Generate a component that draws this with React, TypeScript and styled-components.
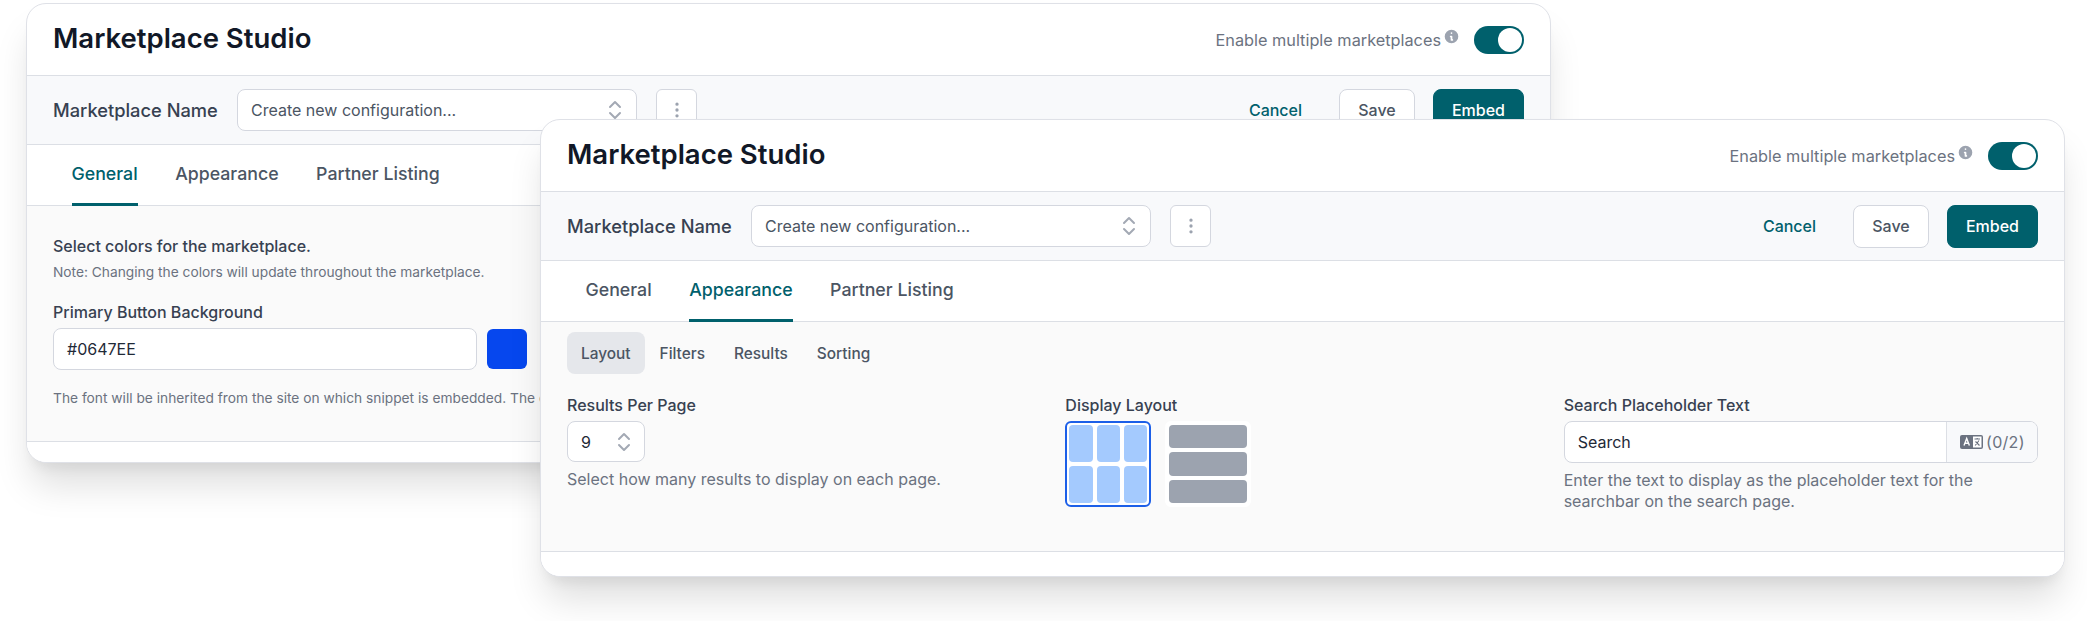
import { ChevronsUpDown, EllipsisVertical } from "lucide-react";
import { HiInformationCircle } from "react-icons/hi";
import styled, { createGlobalStyle } from "styled-components";

const GlobalStyle = createGlobalStyle`
  html, body {
    margin: 0;
    background: #fff;
  }
  body {
    font-family: Inter, "Liberation Sans", sans-serif;
    overflow: hidden;
  }
`;

const Stage = styled.div`
  position: relative;
  width: 2087px;
  height: 621px;
  overflow: hidden;
`;

const Window = styled.section<{ $left: number; $top: number }>`
  position: absolute;
  left: ${(p) => p.$left}px;
  top: ${(p) => p.$top}px;
  width: 1525px;
  box-sizing: border-box;
  background: #fff;
  border: 1px solid #dfe1e7;
  border-radius: 20px;
  box-shadow: 0 27px 36px -5px rgba(0, 0, 0, 0.13),
    0 11px 13px -7px rgba(0, 0, 0, 0.07);
  overflow: hidden;
`;

const Header = styled.header`
  display: flex;
  align-items: center;
  justify-content: space-between;
  height: 71px;
  padding: 0 26px;
  border-bottom: 1px solid #dcdfe5;
`;

const Title = styled.h1`
  margin: 0 0 3px;
  font-size: 27.5px;
  font-weight: 600;
  color: #111827;
`;

const ToggleGroup = styled.div`
  display: flex;
  align-items: center;
`;

const ToggleLabel = styled.span`
  font-size: 16.3px;
  color: #6b7280;
`;

const Info = styled(HiInformationCircle)`
  width: 17px;
  height: 17px;
  margin: -6px 14px 0 2px;
  color: #9ca3af;
`;

const Toggle = styled.span`
  display: flex;
  justify-content: flex-end;
  align-items: center;
  box-sizing: border-box;
  width: 50px;
  height: 28px;
  padding: 2px;
  border-radius: 14px;
  background: #00606c;
`;

const Knob = styled.span`
  width: 24px;
  height: 24px;
  border-radius: 50%;
  background: #fff;
`;

const Toolbar = styled.div`
  display: flex;
  align-items: center;
  height: 68px;
  padding: 0 26px;
  background: #f8f9fb;
  border-bottom: 1px solid #dcdfe5;
`;

const ToolbarLabel = styled.span`
  width: 184px;
  font-size: 18.3px;
  font-weight: 500;
  line-height: 24px;
  color: #374151;
`;

const Select = styled.div`
  display: flex;
  align-items: center;
  justify-content: space-between;
  box-sizing: border-box;
  width: 400px;
  height: 42px;
  padding: 0 9px 0 13px;
  background: #fff;
  border: 1px solid #d4d7df;
  border-radius: 8px;
  font-size: 16px;
  color: #4b5563;
`;

const Chevrons = styled(ChevronsUpDown)`
  flex: none;
  color: #a3a9b4;
`;

const IconButton = styled.button`
  display: flex;
  align-items: center;
  justify-content: center;
  box-sizing: border-box;
  width: 41px;
  height: 42px;
  margin-left: 19px;
  padding: 0;
  background: #fff;
  border: 1px solid #d4d7df;
  border-radius: 6px;
  color: #9ca3af;
`;

const Actions = styled.div`
  display: flex;
  align-items: center;
  margin-left: auto;
`;

const CancelLink = styled.a`
  margin-right: 37px;
  font-size: 16px;
  font-weight: 500;
  color: #00606c;
`;

const Button = styled.button<{ $primary?: boolean }>`
  box-sizing: border-box;
  height: 43px;
  padding: 0;
  width: ${(p) => (p.$primary ? 91 : 76)}px;
  margin-left: ${(p) => (p.$primary ? 18 : 0)}px;
  border: 1px solid ${(p) => (p.$primary ? "#00606c" : "#d4d7df")};
  border-radius: 8px;
  background: ${(p) => (p.$primary ? "#00606c" : "#fff")};
  color: ${(p) => (p.$primary ? "#fff" : "#4b5563")};
  font-family: inherit;
  font-size: 16px;
  font-weight: 500;
`;

const Tabs = styled.nav`
  display: flex;
  gap: 37.5px;
  height: 60px;
  padding-left: 44.5px;
  border-bottom: 1px solid #dcdfe5;
`;

const Tab = styled.a<{ $active?: boolean }>`
  display: flex;
  align-items: center;
  box-sizing: border-box;
  height: 61px;
  padding-bottom: 1px;
  border-bottom: 3px solid ${(p) => (p.$active ? "#00606c" : "transparent")};
  font-size: 17.75px;
  font-weight: 500;
  color: ${(p) => (p.$active ? "#00606c" : "#4b5563")};
`;

const Body = styled.div<{ $paddingTop: number; $paddingBottom: number }>`
  padding: ${(p) => p.$paddingTop}px 26px ${(p) => p.$paddingBottom}px;
  background: #fafafa;
  border-bottom: 1px solid #dcdfe5;
`;

const Footer = styled.div<{ $height: number }>`
  height: ${(p) => p.$height}px;
  background: #fff;
`;

const SectionTitle = styled.p`
  margin: 0;
  font-size: 16px;
  line-height: 20px;
  font-weight: 500;
  color: #374151;
`;

const Note = styled.p<{ $top: number }>`
  margin: ${(p) => p.$top}px 0 0;
  font-size: 13.75px;
  line-height: 20px;
  color: #6b7280;
  white-space: nowrap;
`;

const Label = styled.label<{ $top?: number }>`
  display: block;
  width: fit-content;
  margin-top: ${(p) => p.$top ?? 0}px;
  font-size: 16px;
  line-height: 22px;
  font-weight: 500;
  color: #374151;
`;

const ColorRow = styled.div`
  display: flex;
  align-items: center;
  gap: 10px;
  margin-top: 5px;
`;

const TextInput = styled.div`
  display: flex;
  align-items: center;
  box-sizing: border-box;
  width: 424px;
  height: 42px;
  padding: 0 13px;
  background: #fff;
  border: 1px solid #d4d7df;
  border-radius: 8px;
  font-size: 16px;
  color: #1f2937;
`;

const Swatch = styled.span`
  width: 40px;
  height: 40px;
  border-radius: 6px;
  background: #0647ee;
`;

const SubTabs = styled.div`
  display: flex;
  gap: 1px;
`;

const SubTab = styled.a<{ $active?: boolean }>`
  display: flex;
  align-items: center;
  height: 42px;
  padding: 0 14px;
  border-radius: 8px;
  background: ${(p) => (p.$active ? "#e5e7eb" : "transparent")};
  font-size: 15.4px;
  font-weight: 500;
  color: #4b5563;
`;

const Columns = styled.div`
  display: grid;
  grid-template-columns: repeat(3, 1fr);
  gap: 24px;
  margin-top: 20px;
`;

const Field = styled.div`
  display: flex;
  flex-direction: column;
  align-items: flex-start;
  gap: 5px;
`;

const NumberInput = styled.div`
  display: flex;
  align-items: center;
  justify-content: space-between;
  box-sizing: border-box;
  width: 78px;
  height: 41px;
  padding: 0 8px 0 13px;
  background: #fff;
  border: 1px solid #d4d7df;
  border-radius: 8px;
  font-size: 16px;
  color: #1f2937;
`;

const Help = styled.p`
  margin: 0;
  font-size: 16px;
  line-height: 21px;
  color: #6b7280;
  padding-top: 2px;
`;

const LayoutOptions = styled.div`
  display: flex;
  gap: 14px;
`;

const LayoutTile = styled.div<{ $selected?: boolean; $rows?: boolean }>`
  display: grid;
  box-sizing: border-box;
  width: 86px;
  height: 86px;
  padding: 2px;
  gap: 4px;
  grid-template-columns: ${(p) => (p.$rows ? "1fr" : "repeat(3, 1fr)")};
  grid-template-rows: ${(p) => (p.$rows ? "repeat(3, 1fr)" : "repeat(2, 1fr)")};
  background: #fff;
  border: 2px solid ${(p) => (p.$selected ? "#1c5fe8" : "#fff")};
  border-radius: 6px;
`;

const LayoutCell = styled.span<{ $selected?: boolean }>`
  border-radius: 4px;
  background: ${(p) => (p.$selected ? "#a4cafe" : "#9ca3af")};
`;

const SearchInput = styled.div`
  display: flex;
  align-self: stretch;
  box-sizing: border-box;
  height: 42px;
  background: #fff;
  border: 1px solid #d4d7df;
  border-radius: 8px;
  overflow: hidden;
`;

const SearchValue = styled.span`
  display: flex;
  flex: 1;
  align-items: center;
  padding-left: 13px;
  font-size: 16px;
  color: #1f2937;
`;

const SearchAddon = styled.span`
  display: flex;
  align-items: center;
  gap: 3px;
  width: 91px;
  box-sizing: border-box;
  padding-left: 13px;
  background: #f8f9fb;
  border-left: 1px solid #dcdfe5;
  font-size: 16px;
  letter-spacing: 0.3px;
  color: #6b7280;
`;

const TranslateIcon = () => (
  <svg width="23" height="14" viewBox="0 0 23 14" fill="none">
    <rect width="23" height="14" rx="2" fill="#6b7280" />
    <path d="M4 10.5 6.7 3.5 9.4 10.5M5 8.3h3.4" stroke="#fff" strokeWidth="1.4" />
    <rect x="13" y="1.5" width="8.5" height="11" fill="#fff" />
    <path
      d="M14.5 4h5.5M17.2 3v1M15.2 10.5 19 5.5M15.5 6.5 19.5 10.5"
      stroke="#6b7280"
      strokeWidth="1.1"
    />
  </svg>
);

const LayoutPicker = () => (
  <LayoutOptions>
    <LayoutTile $selected>
      {[0, 1, 2, 3, 4, 5].map((i) => (
        <LayoutCell key={i} $selected />
      ))}
    </LayoutTile>
    <LayoutTile $rows>
      {[0, 1, 2].map((i) => (
        <LayoutCell key={i} />
      ))}
    </LayoutTile>
  </LayoutOptions>
);

const TopBars = () => (
  <>
    <Header>
      <Title>Marketplace Studio</Title>
      <ToggleGroup>
        <ToggleLabel>Enable multiple marketplaces</ToggleLabel>
        <Info />
        <Toggle>
          <Knob />
        </Toggle>
      </ToggleGroup>
    </Header>
    <Toolbar>
      <ToolbarLabel>Marketplace Name</ToolbarLabel>
      <Select>
        Create new configuration...
        <Chevrons size={24} />
      </Select>
      <IconButton>
        <EllipsisVertical size={20} />
      </IconButton>
      <Actions>
        <CancelLink>Cancel</CancelLink>
        <Button>Save</Button>
        <Button $primary>Embed</Button>
      </Actions>
    </Toolbar>
  </>
);

const tabNames = ["General", "Appearance", "Partner Listing"];

const TabBar = ({ active }: { active: string }) => (
  <Tabs>
    {tabNames.map((name) => (
      <Tab key={name} $active={name === active}>
        {name}
      </Tab>
    ))}
  </Tabs>
);

export default function App() {
  return (
    <Stage>
      <GlobalStyle />
      <Window $left={26} $top={3}>
        <TopBars />
        <TabBar active="General" />
        <Body $paddingTop={30} $paddingBottom={33}>
          <SectionTitle>Select colors for the marketplace.</SectionTitle>
          <Note $top={6}>
            Note: Changing the colors will update throughout the marketplace.
          </Note>
          <Label $top={19}>Primary Button Background</Label>
          <ColorRow>
            <TextInput>#0647EE</TextInput>
            <Swatch />
          </ColorRow>
          <Note $top={18}>
            The font will be inherited from the site on which snippet is
            embedded. The colors can be changed at any time.
          </Note>
        </Body>
        <Footer $height={20} />
      </Window>
      <Window $left={540} $top={119}>
        <TopBars />
        <TabBar active="Appearance" />
        <Body $paddingTop={10} $paddingBottom={39}>
          <SubTabs>
            <SubTab $active>Layout</SubTab>
            <SubTab>Filters</SubTab>
            <SubTab>Results</SubTab>
            <SubTab>Sorting</SubTab>
          </SubTabs>
          <Columns>
            <Field>
              <Label>Results Per Page</Label>
              <NumberInput>
                9
                <Chevrons size={24} />
              </NumberInput>
              <Help>Select how many results to display on each page.</Help>
            </Field>
            <Field>
              <Label>Display Layout</Label>
              <LayoutPicker />
            </Field>
            <Field>
              <Label>Search Placeholder Text</Label>
              <SearchInput>
                <SearchValue>Search</SearchValue>
                <SearchAddon>
                  <TranslateIcon />
                  (0/2)
                </SearchAddon>
              </SearchInput>
              <Help>
                Enter the text to display as the placeholder text for the
                searchbar on the search page.
              </Help>
            </Field>
          </Columns>
        </Body>
        <Footer $height={24} />
      </Window>
    </Stage>
  );
}
